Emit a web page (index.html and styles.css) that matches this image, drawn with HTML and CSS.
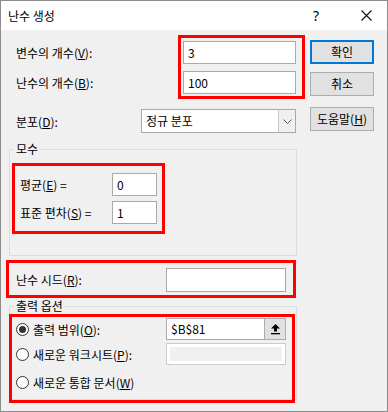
FILE: index.html
```html
<!doctype html>
<html>

<head>
  <meta charset="utf-8">
  <title>난수 생성</title>
  <link rel="stylesheet" href="styles.css">
</head>

<body>
  <div class="dialog">
    <div class="titlebar">
      <span class="title">난수 생성</span>
      <span class="help-q">?</span>
      <span class="close">
        <svg width="11" height="11" viewBox="0 0 11 11"><path d="M0.5 0.5 L10.5 10.5 M10.5 0.5 L0.5 10.5" stroke="#111" stroke-width="1.1" fill="none"/></svg>
      </span>
    </div>

    <div class="main">
      <div class="left">

        <div class="top-row">
          <div class="top-labels">
            <div class="lbl">변수의 개수(<u>V</u>):</div>
            <div class="lbl">난수의 개수(<u>B</u>):</div>
          </div>
          <div class="mark mark-top">
            <div class="field">3</div>
            <div class="field">100</div>
          </div>
        </div>

        <div class="dist-row">
          <div class="dist-label">분포(<u>D</u>):</div>
          <div class="combo">
            <span class="combo-text">정규 분포</span>
            <span class="combo-btn">
              <svg width="9" height="5" viewBox="0 0 9 5"><path d="M0.5 0.5 L4.5 4.5 L8.5 0.5" stroke="#555" fill="none"/></svg>
            </span>
          </div>
        </div>

        <fieldset class="group group-params">
          <legend>모수</legend>
          <div class="mark mark-params">
            <div class="param-row">
              <span class="param-label">평균(<u>E</u>) =</span>
              <div class="field small">0</div>
            </div>
            <div class="param-row">
              <span class="param-label">표준 편차(<u>S</u>) =</span>
              <div class="field small">1</div>
            </div>
          </div>
        </fieldset>

        <div class="mark mark-seed">
          <span class="seed-label">난수 시드(<u>R</u>):</span>
          <div class="field seed"></div>
        </div>

        <fieldset class="group group-output">
          <legend>출력 옵션</legend>
          <div class="mark mark-output">
            <div class="opt-row first">
              <span class="radio checked"></span>
              <span class="opt-label">출력 범위(<u>O</u>):</span>
              <div class="range">
                <div class="range-text">$B$81</div>
                <div class="range-btn">
                  <svg width="11" height="12" viewBox="0 0 11 12"><path d="M5.5 1 L10 5.5 L7 5.5 L7 8.5 L4 8.5 L4 5.5 L1 5.5 Z" fill="#000"/><rect x="1" y="10" width="9" height="1.3" fill="#000"/></svg>
                </div>
              </div>
            </div>
            <div class="opt-row second">
              <span class="radio"></span>
              <span class="opt-label">새로운 워크시트(<u>P</u>):</span>
              <div class="disabled-box"><div class="disabled-inner"></div></div>
            </div>
            <div class="opt-row third">
              <span class="radio"></span>
              <span class="opt-label">새로운 통합 문서(<u>W</u>)</span>
            </div>
          </div>
        </fieldset>

      </div>

      <div class="buttons">
        <div class="btn default">확인</div>
        <div class="btn cancel">취소</div>
        <div class="btn help">도움말(<u>H</u>)</div>
      </div>
    </div>
  </div>
</body>

</html>
```

FILE: styles.css
```css
* {
  box-sizing: border-box;
}

body {
  margin: 0;
  font-family: "Noto Sans CJK KR", "Noto Sans", sans-serif;
  font-size: 12px;
  color: #000;
  background: #f0f0f0;
}

u {
  text-decoration: underline;
  text-underline-offset: 1px;
}

.dialog {
  width: 388px;
  height: 412px;
  border: 1px solid #8c8c8c;
  background: #f0f0f0;
  overflow: hidden;
}

.titlebar {
  height: 29px;
  background: #fff;
  display: flex;
  align-items: center;
  padding-left: 7px;
}

.title {
  flex: 1;
  font-size: 12px;
}

.help-q {
  width: 14px;
  font-size: 14px;
  margin-right: 34px;
  font-family: "Noto Sans", sans-serif;
}

.close {
  width: 11px;
  margin-right: 15px;
  display: flex;
}

.main {
  display: flex;
}

.left {
  width: 308px;
}

.mark {
  border: 3px solid #ff0000;
}

.field {
  background: #fff;
  border: 1px solid #a9a9a9;
  height: 23px;
  line-height: 21px;
  padding-left: 4px;
}

/* top rows */
.top-row {
  display: flex;
  margin-top: 5px;
}

.top-labels {
  width: 177px;
  padding-left: 15px;
  padding-top: 6px;
}

.lbl {
  height: 23px;
  line-height: 23px;
  margin-bottom: 7px;
}

.mark-top {
  width: 127px;
  height: 64px;
  padding: 3px 6px 2px 2px;
}

.mark-top .field + .field {
  margin-top: 7px;
}

.dist-row {
  display: flex;
  align-items: center;
  margin-top: 8px;
  height: 24px;
}

.dist-label {
  width: 140px;
  padding-left: 15px;
}

.combo {
  width: 155px;
  height: 24px;
  background: #fff;
  border: 1px solid #a9a9a9;
  display: flex;
}

.combo-text {
  flex: 1;
  line-height: 22px;
  padding-left: 4px;
}

.combo-btn {
  width: 17px;
  background: #f0f0f0;
  border-left: 1px solid #c8c8c8;
  display: flex;
  align-items: center;
  justify-content: center;
}

/* group boxes */
.group {
  margin: 8px 0 0 8px;
  width: 288px;
  padding: 0;
  border: 1px solid #dcdcdc;
  min-width: 0;
}

.group legend {
  padding: 0 2px;
  margin-left: 4px;
  line-height: 16px;
}

.mark-params {
  margin: 6px 0 0 2px;
  width: 153px;
  height: 71px;
  padding: 7px 5px;
}

.group-params {
  padding-bottom: 21px;
}

.param-row {
  display: flex;
  align-items: center;
  height: 23px;
}

.param-row + .param-row {
  margin-top: 5px;
}

.param-label {
  width: 92px;
}

.field.small {
  width: 45px;
}

.mark-seed {
  margin: 4px 0 0 5px;
  width: 290px;
  height: 38px;
  padding: 5px 0 0 7px;
  display: flex;
  align-items: flex-start;
}

.seed-label {
  width: 150px;
  line-height: 24px;
}

.field.seed {
  width: 120px;
  height: 24px;
}

.group-output {
  margin-top: 0;
}

.mark-output {
  margin: 0 0 -4px -1px;
  width: 286px;
  height: 89px;
  padding: 0 0 0 4px;
}

.opt-row {
  display: flex;
  align-items: center;
  height: 22px;
}

.opt-row.first {
  margin-top: 1px;
}

.opt-row.second {
  margin-top: 3px;
}

.opt-row.third {
  margin-top: 6px;
}

.radio {
  width: 13px;
  height: 13px;
  border: 1px solid #333;
  border-radius: 50%;
  background: #fff;
  display: flex;
  align-items: center;
  justify-content: center;
}

.radio.checked::after {
  content: "";
  width: 7px;
  height: 7px;
  border-radius: 50%;
  background: #333;
}

.opt-label {
  width: 133px;
  margin-left: 4px;
}

.range {
  display: flex;
  width: 120px;
  height: 22px;
  border: 1px solid #a9a9a9;
  background: #fff;
}

.range-text {
  flex: 1;
  line-height: 20px;
  padding-left: 4px;
}

.range-btn {
  width: 22px;
  background: #e1e1e1;
  border: 1px solid #adadad;
  margin: -1px -1px -1px 0;
  display: flex;
  align-items: center;
  justify-content: center;
}

.disabled-box {
  width: 120px;
  height: 22px;
  border: 1px solid #cccccc;
  background: #fff;
  padding: 3px;
}

.disabled-inner {
  height: 100%;
  background: #f0f0f0;
}

/* right buttons */
.buttons {
  width: 64px;
  margin-left: 1px;
  padding-top: 10px;
}

.btn {
  height: 24px;
  background: #e1e1e1;
  border: 1px solid #adadad;
  text-align: center;
  line-height: 22px;
}

.btn.default {
  border: 2px solid #0078d7;
  line-height: 20px;
}

.btn.cancel {
  margin-top: 8px;
}

.btn.help {
  margin-top: 11px;
}
```
